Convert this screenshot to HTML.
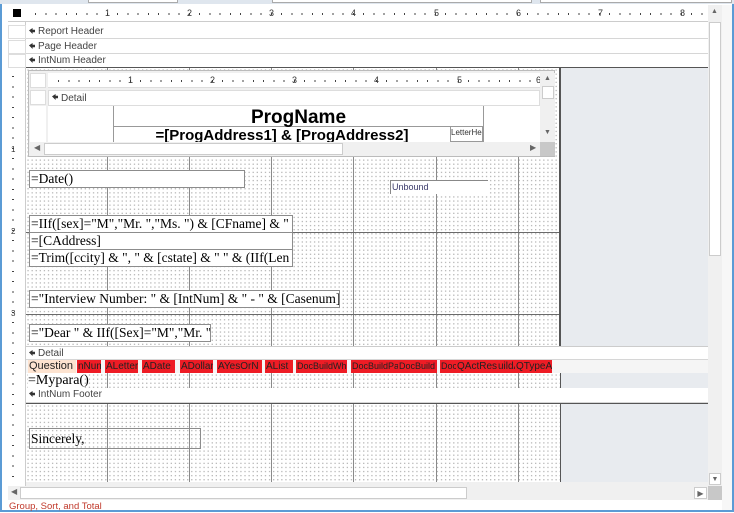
<!DOCTYPE html>
<html><head><meta charset="utf-8"><style>
*{margin:0;padding:0;box-sizing:border-box}
body{width:734px;height:512px;overflow:hidden;background:#fff;position:relative;font-family:"Liberation Sans",sans-serif}
.a{position:absolute}
.bar{position:absolute;background:#fff;border-bottom:1px solid #d6d6d6;font-size:10px;color:#444;padding-left:12px;line-height:14px}
.bar:before{content:"";position:absolute;left:3px;top:3px;width:6px;height:6px;background:#333;clip-path:polygon(0 40%,60% 0,60% 30%,100% 30%,100% 70%,60% 70%,60% 100%)}
.grid{position:absolute;background-color:#fff;background-image:radial-gradient(circle,#b4b4b4 0.55px,transparent 0.85px);background-size:4.1px 4.1px}
.vl{position:absolute;width:1px;background:#8a8a8a}
.hl{position:absolute;height:1px;background:#6a6a6a}
.tb{position:absolute;border:1px solid #8c8c8c;background:#fff;font-family:"Liberation Serif",serif;font-size:13.5px;line-height:16px;padding-left:1px;white-space:nowrap;overflow:hidden;color:#000}
.r{position:absolute;top:360px;height:13px;background:#ee1c25;font-size:10px;line-height:13px;color:#222;white-space:nowrap;overflow:hidden;padding-left:1px}
.ticks{position:absolute;height:2px;background:repeating-linear-gradient(90deg,#444 0 1px,transparent 1px 10.25px)}
.num{position:absolute;font-size:9px;color:#333}
.rl{position:absolute;font-size:8px;color:#333}
</style></head><body>
<div class="a" style="left:0;top:0;width:2px;height:512px;background:#5b9bd5"></div>
<div class="a" style="left:732px;top:0;width:2px;height:512px;background:#5b9bd5"></div>
<div class="a" style="left:0;top:510px;width:734px;height:2px;background:#5b9bd5"></div>
<div class="a" style="left:0;top:0;width:734px;height:4px;background:#dfe6ee"></div>
<div class="a" style="left:88px;top:0;width:90px;height:3px;border:1px solid #aaa;border-top:0;background:#fff"></div>
<div class="a" style="left:272px;top:0;width:260px;height:3px;border:1px solid #aaa;border-top:0;background:#fff"></div>
<div class="a" style="left:540px;top:0;width:192px;height:3px;border:1px solid #aaa;border-top:0;background:#fff"></div>
<div class="a" style="left:8px;top:5px;width:700px;height:17px;background:#fff;border-bottom:1px solid #ccc"></div>
<div class="a" style="left:13px;top:9px;width:8px;height:8px;background:#000"></div>
<div class="ticks" style="left:35px;top:13px;width:670px"></div>
<div class="num" style="left:105px;top:8px">1</div><div class="num" style="left:187px;top:8px">2</div><div class="num" style="left:269px;top:8px">3</div><div class="num" style="left:351px;top:8px">4</div><div class="num" style="left:434px;top:8px">5</div><div class="num" style="left:516px;top:8px">6</div><div class="num" style="left:598px;top:8px">7</div><div class="num" style="left:680px;top:8px">8</div>
<div class="a" style="left:8px;top:22px;width:18px;height:464px;background:#fff;border-right:1px solid #ccc"></div>
<div class="a" style="left:8px;top:25px;width:18px;height:14px;border:1px solid #ddd"></div>
<div class="a" style="left:8px;top:40px;width:18px;height:14px;border:1px solid #ddd"></div>
<div class="a" style="left:8px;top:54px;width:18px;height:14px;border:1px solid #ddd"></div>
<div class="a" style="left:12px;top:76px;width:2px;height:406px;background:repeating-linear-gradient(180deg,#444 0 1px,transparent 1px 10.25px)"></div>
<div class="rl" style="left:11px;top:145px">1</div><div class="rl" style="left:11px;top:227px">2</div><div class="rl" style="left:11px;top:309px">3</div>
<div class="bar" style="left:26px;top:25px;width:682px;height:14px">Report Header</div>
<div class="bar" style="left:26px;top:40px;width:682px;height:14px">Page Header</div>
<div class="bar" style="left:26px;top:54px;width:682px;height:14px">IntNum Header</div>
<div class="a" style="left:26px;top:67px;width:682px;height:1px;background:#555"></div>
<div class="a" style="left:560px;top:68px;width:148px;height:414px;background:#e8ebef"></div>
<div class="grid" style="left:26px;top:68px;width:534px;height:278px"></div>
<div class="vl" style="left:107px;top:68px;height:278px"></div><div class="vl" style="left:189px;top:68px;height:278px"></div><div class="vl" style="left:271px;top:68px;height:278px"></div><div class="vl" style="left:353px;top:68px;height:278px"></div><div class="vl" style="left:436px;top:68px;height:278px"></div><div class="vl" style="left:518px;top:68px;height:278px"></div>
<div class="hl" style="left:26px;top:232px;width:534px"></div><div class="hl" style="left:26px;top:314px;width:534px"></div>
<div class="a" style="left:559px;top:68px;width:2px;height:414px;background:#555"></div>
<div class="a" style="left:28px;top:70px;width:527px;height:87px;background:#f0f0f0;border:1px solid #bbb"></div>
<div class="a" style="left:30px;top:73px;width:16px;height:15px;background:#fff;border:1px solid #ddd"></div>
<div class="a" style="left:48px;top:73px;width:492px;height:15px;background:#fff;border-bottom:1px solid #ddd"></div>
<div class="ticks" style="left:58px;top:80px;width:480px"></div>
<div class="num" style="left:128px;top:75px">1</div><div class="num" style="left:210px;top:75px">2</div><div class="num" style="left:292px;top:75px">3</div><div class="num" style="left:374px;top:75px">4</div><div class="num" style="left:457px;top:75px">5</div><div class="num" style="left:536px;top:75px">6</div>
<div class="a" style="left:30px;top:90px;width:16px;height:15px;background:#fff;border:1px solid #ddd"></div>
<div class="a" style="left:30px;top:106px;width:16px;height:36px;background:#fff"></div>
<div class="bar" style="left:48px;top:90px;width:492px;height:16px;line-height:16px;border:1px solid #ddd">Detail</div>
<div class="a" style="left:48px;top:106px;width:492px;height:36px;background:#fff"></div>
<div class="a" style="left:113px;top:106px;width:1px;height:36px;background:#999"></div>
<div class="a" style="left:483px;top:106px;width:1px;height:36px;background:#999"></div>
<div class="a" style="left:113px;top:126px;width:370px;height:1px;background:#999"></div>
<div class="a" style="left:114px;top:106px;width:369px;height:20px;font-size:19px;font-weight:bold;text-align:center;line-height:24px;color:#000">ProgName</div>
<div class="a" style="left:114px;top:127px;width:336px;height:15px;font-size:15px;font-weight:bold;text-align:center;line-height:17px;overflow:hidden;color:#000">=[ProgAddress1] &amp; [ProgAddress2]</div>
<div class="a" style="left:450px;top:126px;width:33px;height:16px;border:1px solid #999;font-size:8px;line-height:12px;overflow:hidden;color:#333;white-space:nowrap">LetterHe</div>
<div class="a" style="left:540px;top:73px;width:15px;height:69px;background:#f0f0f0"></div>
<div class="a" style="left:542px;top:86px;width:12px;height:13px;background:#fff;border:1px solid #ccc"></div>
<div class="a" style="left:544px;top:75px;font-size:7px;color:#666">▲</div>
<div class="a" style="left:544px;top:129px;font-size:7px;color:#666">▼</div>
<div class="a" style="left:30px;top:142px;width:510px;height:14px;background:#f0f0f0"></div>
<div class="a" style="left:44px;top:143px;width:299px;height:12px;background:#fff;border:1px solid #ccc"></div>
<div class="a" style="left:34px;top:143px;font-size:8px;color:#666">◀</div>
<div class="a" style="left:530px;top:143px;font-size:8px;color:#666">▶</div>
<div class="a" style="left:540px;top:142px;width:15px;height:14px;background:#c8c8c8"></div>
<div class="tb" style="left:29px;top:170px;width:216px;height:18px">=Date()</div>
<div class="a" style="left:390px;top:180px;width:98px;height:14px;border-left:1px solid #888;border-top:1px solid #888;background:#fff;font-size:9px;line-height:13px;color:#3a3a6a;padding-left:1px">Unbound</div>
<div class="tb" style="left:29px;top:215px;width:264px;height:18px">=IIf([sex]="M","Mr. ","Ms. ") &amp; [CFname] &amp; "</div>
<div class="tb" style="left:29px;top:232px;width:264px;height:18px">=[CAddress]</div>
<div class="tb" style="left:29px;top:249px;width:264px;height:18px">=Trim([ccity] &amp; ", " &amp; [cstate] &amp; "  " &amp; (IIf(Len</div>
<div class="tb" style="left:29px;top:290px;width:311px;height:18px">="Interview Number: " &amp; [IntNum] &amp; " - " &amp; [Casenum]</div>
<div class="tb" style="left:29px;top:324px;width:182px;height:18px">="Dear " &amp; IIf([Sex]="M","Mr. "</div>
<div class="bar" style="left:26px;top:346px;width:682px;height:14px;border-top:1px solid #ccc">Detail</div>
<div class="a" style="left:26px;top:360px;width:682px;height:13px;background:#f5f5f5"></div>
<div class="r" style="left:28px;width:48px;background:#fde3d0;font-size:11px">Question</div>
<div class="r" style="left:77px;width:24px">nNum</div>
<div class="r" style="left:105px;width:33px">ALetter</div>
<div class="r" style="left:142px;width:33px">ADate</div>
<div class="r" style="left:180px;width:33px">ADollar</div>
<div class="r" style="left:217px;width:45px">AYesOrN</div>
<div class="r" style="left:265px;width:28px">AList</div>
<div class="r" style="left:296px;width:51px;font-size:9px">DocBuildWh</div>
<div class="r" style="left:351px;width:47px;font-size:9px">DocBuildPa</div>
<div class="r" style="left:398px;width:39px;font-size:9px">DocBuild</div>
<div class="r" style="left:440px;width:16px;font-size:9px">Doc</div>
<div class="r" style="left:456px;width:41px">QActResp</div>
<div class="r" style="left:497px;width:18px">uildA</div>
<div class="r" style="left:515px;width:37px">QTypeA</div>
<div class="grid" style="left:26px;top:373px;width:534px;height:15px"></div>
<div class="vl" style="left:107px;top:373px;height:15px"></div><div class="vl" style="left:189px;top:373px;height:15px"></div><div class="vl" style="left:271px;top:373px;height:15px"></div><div class="vl" style="left:353px;top:373px;height:15px"></div><div class="vl" style="left:436px;top:373px;height:15px"></div><div class="vl" style="left:518px;top:373px;height:15px"></div>
<div class="a" style="left:28px;top:374px;width:54px;height:14px;font-family:'Liberation Serif',serif;font-size:14px;line-height:14px;background:#fff">=Mypara()</div>
<div class="bar" style="left:26px;top:388px;width:682px;height:15px">IntNum Footer</div>
<div class="a" style="left:26px;top:403px;width:682px;height:1px;background:#555"></div>
<div class="grid" style="left:26px;top:404px;width:534px;height:78px"></div>
<div class="vl" style="left:107px;top:404px;height:78px"></div><div class="vl" style="left:189px;top:404px;height:78px"></div><div class="vl" style="left:271px;top:404px;height:78px"></div><div class="vl" style="left:353px;top:404px;height:78px"></div><div class="vl" style="left:436px;top:404px;height:78px"></div><div class="vl" style="left:518px;top:404px;height:78px"></div>
<div class="tb" style="left:29px;top:428px;width:172px;height:21px;line-height:19px;background:transparent">Sincerely,</div>
<div class="a" style="left:26px;top:482px;width:682px;height:4px;background:#f0f0f0"></div>
<div class="a" style="left:708px;top:5px;width:14px;height:495px;background:#f0f0f0"></div>
<div class="a" style="left:709px;top:22px;width:12px;height:234px;background:#fff;border:1px solid #ccc"></div>
<div class="a" style="left:711px;top:8px;font-size:7px;color:#666">▲</div>
<div class="a" style="left:709px;top:473px;width:12px;height:12px;background:#fff;border:1px solid #ccc;font-size:7px;color:#666;text-align:center;line-height:11px">▼</div>
<div class="a" style="left:8px;top:486px;width:700px;height:14px;background:#f0f0f0"></div>
<div class="a" style="left:20px;top:487px;width:447px;height:12px;background:#fff;border:1px solid #ccc"></div>
<div class="a" style="left:11px;top:487px;font-size:8px;color:#666">◀</div>
<div class="a" style="left:694px;top:487px;width:13px;height:12px;background:#fff;border:1px solid #ccc;font-size:8px;color:#666;line-height:11px;text-align:center">▶</div>
<div class="a" style="left:708px;top:486px;width:14px;height:14px;background:#c8c8c8"></div>
<div class="a" style="left:722px;top:5px;width:10px;height:505px;background:#f7f7f7"></div>
<div class="a" style="left:9px;top:501px;font-size:9.5px;color:#c0392b;line-height:12px">Group, Sort, and Total</div>
</body></html>
